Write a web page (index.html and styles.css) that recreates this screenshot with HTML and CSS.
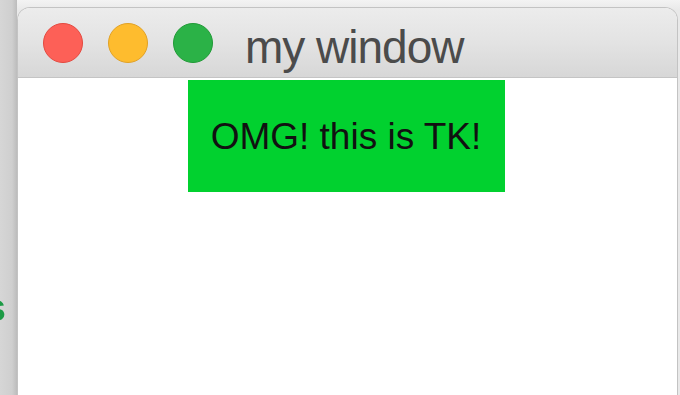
FILE: index.html
```html
<!DOCTYPE html>
<html>
<head>
<meta charset="utf-8">
<link rel="stylesheet" href="styles.css">
</head>
<body>
<div class="desktop">
  <div class="side"><span class="side-text">Tools</span></div>
  <div class="window">
    <div class="titlebar">
      <span class="light red"></span>
      <span class="light yellow"></span>
      <span class="light green"></span>
      <span class="title">my window</span>
    </div>
    <div class="content">
      <div class="label">OMG! this is TK!</div>
    </div>
  </div>
</div>
</body>
</html>
```
FILE: styles.css
```css
html, body {
  margin: 0;
  padding: 0;
  width: 680px;
  height: 395px;
  overflow: hidden;
  background: #efefef;
}
.desktop {
  display: flex;
  height: 395px;
  padding-top: 7px;
  padding-right: 2px;
  box-sizing: border-box;
  background: linear-gradient(#f3f3f3, #e9e9e9 10px);
}
.side {
  width: 17px;
  flex: none;
  display: flex;
  justify-content: flex-end;
  align-items: flex-start;
  overflow: hidden;
  margin-top: -7px;
  background: linear-gradient(90deg, #d6d6d6, #cfcfcf 12px, #bcbcbc);
}
.side-text {
  margin-top: 286px;
  margin-right: 11px;
  font-family: "Liberation Sans", Arial, sans-serif;
  font-weight: bold;
  font-size: 38px;
  line-height: 44px;
  color: #1c9a45;
  white-space: nowrap;
  filter: blur(0.6px);
}
.window {
  flex: 1;
  display: flex;
  flex-direction: column;
  border: 1px solid #c3c3c3;
  border-bottom: none;
  border-radius: 13px 13px 0 0;
  overflow: hidden;
  background: #ffffff;
}
.titlebar {
  height: 69px;
  flex: none;
  display: flex;
  align-items: center;
  padding-left: 25px;
  background: linear-gradient(#ececec, #e3e3e3 50%, #d7d7d7);
  border-bottom: 1px solid #c4c4c4;
}
.light {
  width: 38px;
  height: 38px;
  border-radius: 50%;
  flex: none;
  margin-right: 25px;
}
.red {
  background: #fd6057;
  border: 1px solid #e4493f;
}
.yellow {
  background: #febc2e;
  border: 1px solid #e1a125;
}
.green {
  background: #2bb247;
  border: 1px solid #209a36;
  margin-right: 32px;
}
.title {
  font-family: "Liberation Sans", Arial, sans-serif;
  font-size: 46px;
  letter-spacing: -1px;
  color: #4b4b4b;
  margin-top: 9px;
}
.content {
  flex: 1;
  display: flex;
  justify-content: center;
  align-items: flex-start;
  padding-top: 2px;
}
.label {
  width: 317px;
  height: 112px;
  box-sizing: border-box;
  padding-top: 2px;
  display: flex;
  align-items: center;
  justify-content: center;
  background: #01d12f;
  font-family: "Liberation Sans", Arial, sans-serif;
  font-size: 37px;
  color: #111111;
  margin-left: -3px;
}
```
